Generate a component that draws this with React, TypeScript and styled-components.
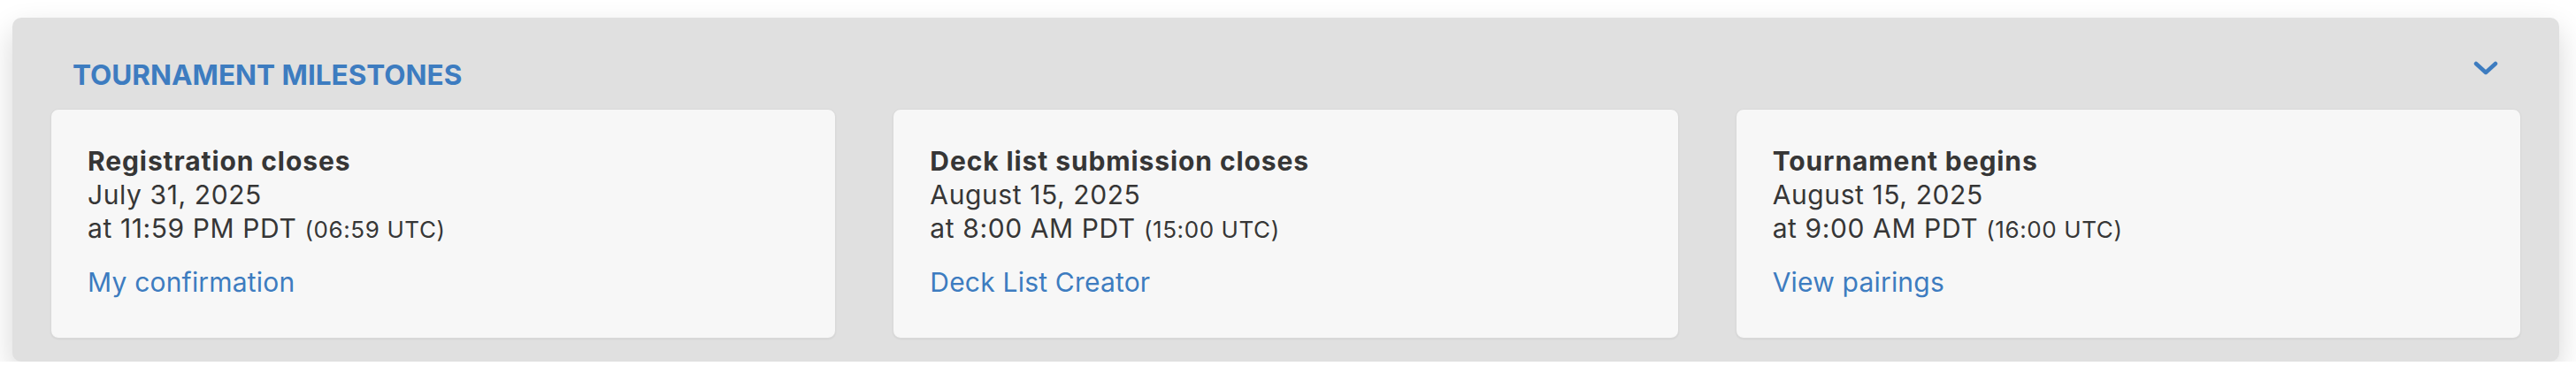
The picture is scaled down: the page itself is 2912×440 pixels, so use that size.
import styled, { createGlobalStyle } from 'styled-components'

const GlobalStyle = createGlobalStyle`
  body {
    margin: 0;
    background: #ffffff;
    font-family: Inter, "Noto Sans", sans-serif;
    color: #363636;
  }
`

type Milestone = {
  title: string
  date: string
  time: string
  utc: string
  link: string
}

const milestones: Milestone[] = [
  {
    title: 'Registration closes',
    date: 'July 31, 2025',
    time: 'at 11:59 PM PDT',
    utc: '(06:59 UTC)',
    link: 'My confirmation',
  },
  {
    title: 'Deck list submission closes',
    date: 'August 15, 2025',
    time: 'at 8:00 AM PDT',
    utc: '(15:00 UTC)',
    link: 'Deck List Creator',
  },
  {
    title: 'Tournament begins',
    date: 'August 15, 2025',
    time: 'at 9:00 AM PDT',
    utc: '(16:00 UTC)',
    link: 'View pairings',
  },
]

const App: React.FC = () => {
  return (
    <>
      <GlobalStyle />
      <Panel>
        <Header>
          <Heading>TOURNAMENT MILESTONES</Heading>
          <ToggleButton aria-label="Collapse">
            <svg width="28" height="16" viewBox="0 0 28 16">
              <polyline
                points="3,3 14,13 25,3"
                fill="none"
                stroke="#3d7cc0"
                strokeWidth="4.5"
                strokeLinecap="round"
                strokeLinejoin="round"
              />
            </svg>
          </ToggleButton>
        </Header>
        <CardGrid>
          {milestones.map((m) => (
            <Card key={m.title}>
              <CardTitle>{m.title}</CardTitle>
              <Line>{m.date}</Line>
              <Line>
                {m.time} <Utc>{m.utc}</Utc>
              </Line>
              <CardLink href="#">{m.link}</CardLink>
            </Card>
          ))}
        </CardGrid>
      </Panel>
    </>
  )
}

export default App

const Panel = styled.section`
  margin: 20px 19px 0 14px;
  padding: 45px 43px 26px;
  background: #e0e0e0;
  border-radius: 10px;
  box-shadow: 0 14px 34px rgba(0, 0, 0, 0.16);
`

const Header = styled.div`
  display: flex;
  align-items: center;
  justify-content: space-between;
  height: 40px;
  margin-bottom: 18px;
`

const Heading = styled.h2`
  margin: 0 0 0 25px;
  font-size: 31.5px;
  line-height: 40px;
  font-weight: 700;
  color: #3d7cc0;
`

const ToggleButton = styled.button`
  display: flex;
  align-items: center;
  justify-content: center;
  margin: -16px 26px 0 0;
  padding: 0;
  border: none;
  background: none;
  cursor: pointer;
`

const CardGrid = styled.div`
  display: grid;
  grid-template-columns: repeat(3, 1fr);
  gap: 64px;
`

const Card = styled.div`
  display: flex;
  flex-direction: column;
  align-items: flex-start;
  height: 260px;
  box-sizing: border-box;
  padding: 39px 41px 0;
  background: #f7f7f7;
  border: 1px solid #d9d9d9;
  border-radius: 9px;
  box-shadow: 0 1px 2px rgba(0, 0, 0, 0.06);
`

const CardTitle = styled.div`
  font-size: 30px;
  line-height: 38px;
  font-weight: 700;
  letter-spacing: 0.9px;
`

const Line = styled.div`
  font-size: 30px;
  line-height: 38px;
  letter-spacing: 0.6px;
`

const Utc = styled.span`
  font-size: 26px;
  letter-spacing: 0.6px;
`

const CardLink = styled.a`
  margin-top: 21px;
  font-size: 30px;
  line-height: 38px;
  letter-spacing: 0.2px;
  color: #3d7cc0;
  text-decoration: none;
`
